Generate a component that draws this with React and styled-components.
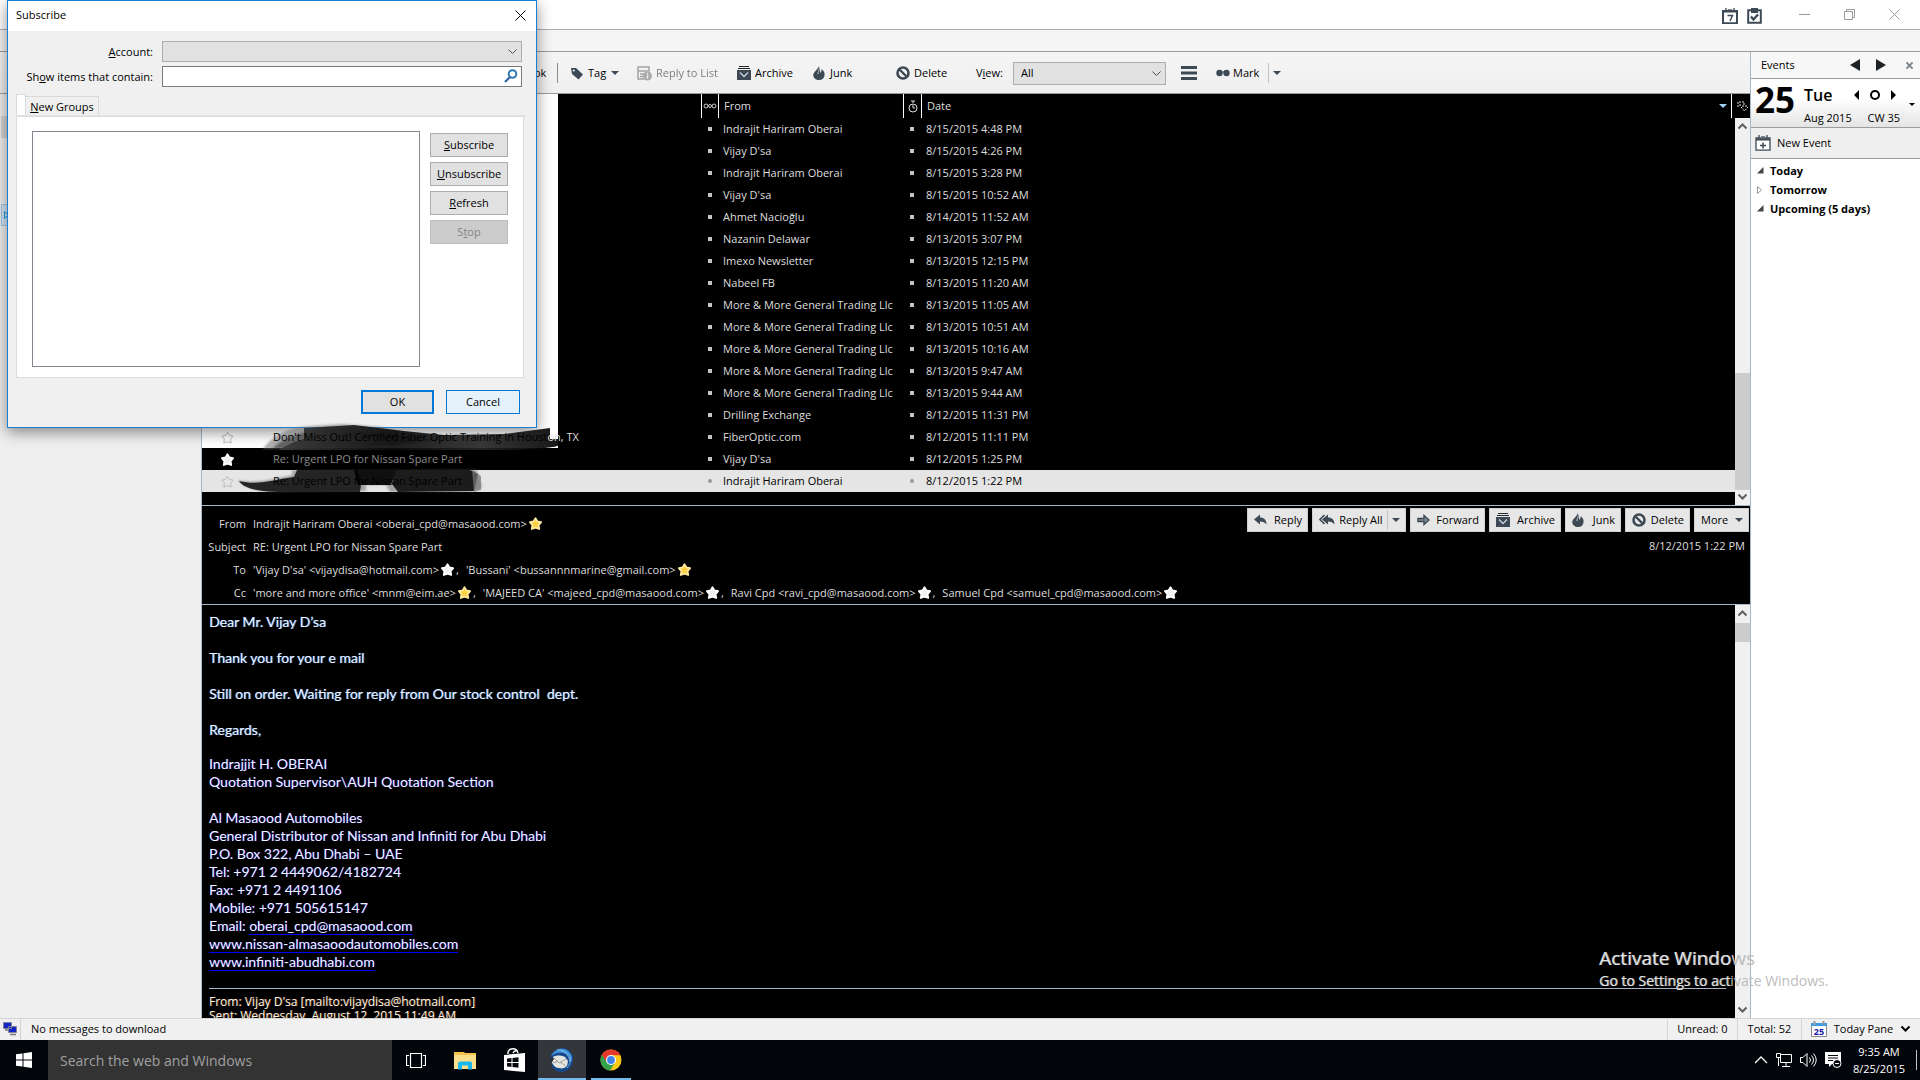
import React from 'react';
import styled, { createGlobalStyle } from 'styled-components';

const GlobalStyle = createGlobalStyle`
	* {
		box-sizing: border-box;
	}
	body {
		margin: 0;
		overflow: hidden;
		background: #000;
		color: #000;
		font-family: "Open Sans", "Noto Sans", sans-serif;
		font-size: 11px;
		line-height: 16px;
	}
	button, input, select {
		font: inherit;
		color: inherit;
		margin: 0;
		border-radius: 0;
	}
	svg {
		display: block;
		flex: none;
	}
`

const Desktop = styled.div`
	position: relative;
	display: flex;
	flex-direction: column;
	height: 100vh;
`

const TitleBar = styled.div`
	display: flex;
	justify-content: flex-end;
	align-items: center;
	height: 30px;
	padding-right: 20px;
	background: #fff;
	border-bottom: 1px solid #a5b0b9;
`

const TitleIcons = styled.div`
	display: flex;
	gap: 9px;
	margin-right: 37px;
	padding-top: 2px;
`

const WindowButtons = styled.div`
	display: flex;
	gap: 34px;
`

const PlainButton = styled.button`
	display: flex;
	align-items: center;
	gap: ${props => props.$gap || 4}px;
	padding: 0;
	border: 0;
	background: none;
	white-space: nowrap;
	opacity: ${props => props.disabled ? 0.5 : 1};
`

const MenuBar = styled.div`
	height: 22px;
	background: #f5f5f5;
	border-bottom: 1px solid #9c9c9c;
`

const Workspace = styled.div`
	display: flex;
	flex: 1;
	min-height: 0;
`

const MailArea = styled.div`
	display: flex;
	flex-direction: column;
	flex: 1;
	min-width: 0;
`

const Toolbar = styled.div`
	display: flex;
	align-items: center;
	height: 42px;
	padding: 1px 0 0 534px;
	background: linear-gradient(#f5f5f5, #efefef);
	border-bottom: 1px solid #9c9c9c;
`

const ToolGroup = styled.div`
	display: flex;
	align-items: center;
	gap: 5px;
	width: ${props => props.$width}px;
`

const Divider = styled.div`
	width: 1px;
	height: 20px;
	background: ${props => props.$light ? '#bfc4c8' : '#8a8a8a'};
	margin-right: ${props => props.$after || 0}px;
`

const SelectBox = styled.div`
	display: grid;
	width: ${props => props.$width};
	height: ${props => props.$height}px;
	align-items: center;
	> * {
		grid-area: 1 / 1;
	}
	svg {
		justify-self: end;
		margin-right: 5px;
		pointer-events: none;
	}
`

const Select = styled.select`
	appearance: none;
	width: 100%;
	height: 100%;
	padding: 0 7px;
	background: #e1e1e1;
	border: 1px solid #adadad;
`

const Panes = styled.div`
	display: flex;
	flex: 1;
	min-height: 0;
`

const FolderPane = styled.div`
	width: 202px;
	background: #efefef;
	border-right: 1px solid #a9b7c9;
`

const FolderMark = styled.div`
	display: flex;
	align-items: center;
	justify-content: center;
	width: 10px;
	height: 22px;
	margin: ${props => props.$top}px 0 0 1px;
	background: ${props => props.$color};
	border: 1px solid ${props => props.$line};
`

const MessageColumn = styled.div`
	display: flex;
	flex-direction: column;
	flex: 1;
	min-width: 0;
	background: #000;
`

const ThreadPane = styled.div`
	position: relative;
	padding-bottom: 13px;
	border-bottom: 1px solid #a9b7c9;
	background: linear-gradient(#fff, #fff) no-repeat 0 0 / 356px 356px, #000;
`

const ThreadTable = styled.table`
	width: 100%;
	table-layout: fixed;
	border-spacing: 0;
	color: #dedede;
	th, td {
		padding: 0;
		text-align: left;
		font-weight: 400;
		white-space: nowrap;
		overflow: hidden;
	}
	th {
		height: 24px;
	}
	td {
		height: 22px;
	}
`

const HeadCell = styled.th`
	border-left: ${props => props.$line ? '1px solid #fff' : '0'};
	&& {
		padding-left: ${props => props.$pad || 0}px;
	}
`

const HeadInner = styled.div`
	display: flex;
	align-items: center;
	justify-content: space-between;
	padding-right: 4px;
`

const MailRow = styled.tr`
	color: ${props => props.$selected ? '#000' : '#dedede'};
	td {
		background: ${props => props.$selected ? '#e5e5e5' : props.$dark ? '#000' : 'transparent'};
	}
`

const TextCell = styled.td`
	&& {
		padding-left: 5px;
	}
`

const Subject = styled.span`
	position: relative;
	z-index: 3;
	color: ${props => props.$color || '#000'};
`

const Dot = styled.div`
	width: 4px;
	height: 4px;
	margin: 0 auto;
	background: ${props => props.$selected ? '#9a9a9a' : '#c4c4c4'};
	border-radius: ${props => props.$selected ? 2 : 0}px;
`

const Smear = styled.svg`
	position: absolute;
	left: 36px;
	top: 328px;
	z-index: 2;
	pointer-events: none;
`

const ScrollTrack = styled.div`
	display: flex;
	flex-direction: column;
	align-items: center;
	justify-content: space-between;
	width: 15px;
	background: #f0f0f0;
	padding: 5px 0;
`

const ThreadScroll = styled(ScrollTrack)`
	position: absolute;
	top: 24px;
	right: 0;
	bottom: 0;
`

const Thumb = styled.div`
	width: 15px;
	height: ${props => props.$height}px;
	margin-top: ${props => props.$top}px;
	margin-bottom: auto;
	background: #cdcdcd;
`

const MessageHeader = styled.div`
	display: flex;
	justify-content: space-between;
	border-bottom: 1px solid #a9b7c9;
	color: #dedede;
`

const Fields = styled.dl`
	display: grid;
	grid-template-columns: 44px auto;
	column-gap: 7px;
	grid-auto-rows: 23px;
	align-items: center;
	margin: 6px 0 0;
	white-space: nowrap;
	dt {
		text-align: right;
	}
	dd {
		display: flex;
		align-items: center;
		margin: 0;
	}
`

const Address = styled.span`
	display: flex;
	align-items: center;
	gap: 2px;
	margin-right: 7px;
`

const HeaderSide = styled.div`
	display: flex;
	flex-direction: column;
	align-items: flex-end;
	gap: 6px;
	padding-top: 2px;
`

const ButtonRow = styled.div`
	display: flex;
	gap: 4px;
	padding-right: 1px;
`

const HeaderButton = styled.button`
	display: flex;
	align-items: center;
	justify-content: space-between;
	width: ${props => props.$width}px;
	height: 24px;
	padding: 0 5px 0 6px;
	border: 1px solid #d0d0d0;
	background: #e6e6e6;
	color: #000;
	white-space: nowrap;
`

const SentDate = styled.div`
	padding-right: 5px;
`

const MessageBody = styled.div`
	display: flex;
	flex: 1;
	min-height: 0;
	overflow: hidden;
`

const Letter = styled.div`
	flex: 1;
	min-width: 0;
	padding: 8px 9px 0 7px;
	overflow: hidden;
	color: #eef4ff;
	font-family: Lato, sans-serif;
	font-size: 14px;
	line-height: 18px;
	text-shadow: 1px 0 #2b6cb8;
	p {
		margin: 0 0 18px;
		white-space: pre-wrap;
	}
`

const Signature = styled.div`
	margin-top: -2px;
	color: #f4f4ff;
	text-shadow: 1px 0 #0a0aa0;
	a {
		color: inherit;
		text-decoration: none;
		border-bottom: 1px solid #00f;
	}
`

const Quoted = styled.div`
	margin-top: 17px;
	padding-top: 6px;
	border-top: 1px solid #a9b7c9;
	color: #fff3e4;
	font-family: "Open Sans", sans-serif;
	font-size: 12px;
	line-height: 14px;
	text-shadow: 1px 0 #5a3410;
`

const TodayPane = styled.aside`
	width: 170px;
	background: #fff;
	border-left: 1px solid #a9b7c9;
`

const EventsBar = styled.div`
	display: flex;
	align-items: center;
	height: 27px;
	padding: 0 7px 0 10px;
	background: #f7f7f7;
	border-bottom: 1px solid #9c9c9c;
`

const EventsArrows = styled.div`
	display: flex;
	gap: 16px;
	margin: 0 20px 0 auto;
`

const DayBox = styled.div`
	display: flex;
	height: 49px;
	padding: 0 4px 0 4px;
	background: linear-gradient(#fff 40%, #e4e4e4);
	border-bottom: 1px solid #9c9c9c;
`

const DayNumber = styled.div`
	width: 49px;
	font-size: 35px;
	line-height: 42px;
	font-weight: 700;
`

const DayInfo = styled.div`
	display: flex;
	flex-direction: column;
	width: 96px;
	padding-top: 7px;
	gap: 5px;
`

const DayLine = styled.div`
	display: flex;
	align-items: center;
	justify-content: space-between;
	line-height: 18px;
	padding-right: ${props => props.$big ? 3 : 0}px;
	font-size: ${props => props.$big ? 16 : 11}px;
	font-weight: ${props => props.$big ? 600 : 400};
`

const NewEventBar = styled.div`
	display: flex;
	align-items: center;
	height: 31px;
	padding-left: 4px;
	background: #efefef;
	border-bottom: 1px solid #9c9c9c;
`

const EventTree = styled.ul`
	margin: 0;
	padding: 2px 0 0 6px;
	list-style: none;
	font-weight: 700;
	li {
		display: flex;
		align-items: center;
		gap: 6px;
		height: 19px;
	}
`

const StatusBar = styled.div`
	display: flex;
	height: 22px;
	background: #f0f0f0;
	border-top: 1px solid #d5d5d5;
`

const StatusCell = styled.div`
	display: flex;
	align-items: center;
	justify-content: ${props => props.$grow ? 'flex-start' : 'center'};
	flex: ${props => props.$grow ? 1 : 'none'};
	width: ${props => props.$width}px;
	padding: 0 0 2px ${props => props.$grow ? 10 : 0}px;
	border-left: ${props => props.$first ? 0 : 1}px solid #d5d5d5;
`

const Taskbar = styled.div`
	display: flex;
	height: 40px;
	background: #02050a;
	color: #fff;
`

const TaskItem = styled.button`
	display: flex;
	align-items: center;
	justify-content: center;
	width: ${props => props.$width}px;
	padding: 0;
	border: 0;
	border-bottom: 2px solid ${props => props.$open ? '#76b9ed' : 'transparent'};
	border-top: 2px solid transparent;
	margin-right: ${props => props.$after || 0}px;
	background: ${props => props.$active ? '#33373c' : 'transparent'} border-box;
`

const SearchInput = styled.input`
	width: 344px;
	padding: 2px 12px 0;
	border: 0;
	background: #333;
	&& {
		font-size: 14px;
	}
	&::placeholder {
		color: #a0a0a0;
		opacity: 1;
	}
`

const Tray = styled.div`
	display: flex;
	align-items: center;
	gap: 8px;
	margin-left: auto;
	padding-right: 3px;
`

const Clock = styled.div`
	width: 58px;
	text-align: center;
	line-height: 17px;
`

const Watermark = styled.div`
	position: absolute;
	left: calc(100% - 321px);
	bottom: 88px;
	z-index: 4;
	color: #bcbcbc;
	font-size: 14px;
	line-height: 22px;
	white-space: nowrap;
	pointer-events: none;
	span {
		color: #e2e2e2;
		text-shadow: 1px 0 #8a8a8a;
	}
`

const WatermarkTitle = styled.div`
	font-size: 19px;
	line-height: 24px;
`

const Dialog = styled.div`
	position: absolute;
	left: 7px;
	top: 0;
	z-index: 1;
	width: 530px;
	background: #f0f0f0;
	border: 1px solid #1a7fd4;
	box-shadow: 0 4px 14px rgba(0, 0, 0, 0.45);
`

const DialogTitle = styled.div`
	display: flex;
	align-items: center;
	justify-content: space-between;
	height: 30px;
	padding: 0 10px 2px 8px;
	background: #fff;
`

const DialogForm = styled.div`
	display: grid;
	grid-template-columns: 137px 360px;
	grid-auto-rows: 21px;
	gap: 4px 9px;
	align-items: center;
	margin: 10px 0 0 8px;
	label {
		text-align: right;
	}
`

const FilterBox = styled.div`
	display: flex;
	align-items: center;
	height: 21px;
	padding: 0 3px 2px 0;
	background: #fff;
	border: 1px solid #7a7a7a;
	input {
		flex: 1;
		min-width: 0;
		height: 17px;
		border: 0;
		outline: 0;
		background: none;
	}
`

const TabStrip = styled.div`
	display: flex;
	align-items: flex-end;
	height: 21px;
	margin: 8px 10px 0 8px;
	border-bottom: 1px solid #e3e3e3;
`

const EmptyTab = styled.div`
	width: 10px;
	height: 21px;
	background: #fff;
	border: 1px solid #d9d9d9;
	border-bottom: 0;
`

const Tab = styled.button`
	height: 19px;
	width: 73px;
	padding: 2px 0 0;
	background: #f0f0f0;
	border: 1px solid #d9d9d9;
	border-left: 0;
	border-bottom: 0;
`

const TabPanel = styled.div`
	display: flex;
	align-items: flex-start;
	gap: 10px;
	margin: 0 12px 0 8px;
	height: 262px;
	padding: 14px 15px;
	background: #fff;
	border: 1px solid #dcdcdc;
`

const GroupList = styled.div`
	flex: 1;
	height: 236px;
	border: 1px solid #828790;
`

const SideButtons = styled.div`
	display: flex;
	flex-direction: column;
	gap: 5px;
	padding-top: 2px;
`

const DialogButton = styled.button`
	width: ${props => props.$width || 78}px;
	height: 24px;
	padding: 0;
	background: ${props => props.disabled ? '#ccc' : props.$hover ? '#e5f1fb' : '#e1e1e1'};
	border: ${props => props.$primary ? 2 : 1}px solid ${props => props.$primary || props.$hover ? '#0078d7' : props.disabled ? '#bfbfbf' : '#adadad'};
	color: ${props => props.disabled ? '#838383' : '#000'};
`

const DialogFooter = styled.div`
	display: flex;
	justify-content: flex-end;
	gap: 12px;
	padding: 12px 16px 13px;
`

const INK = '#3d4a55';

const senders = [
	['Indrajit Hariram Oberai', '8/15/2015 4:48 PM'],
	["Vijay D'sa", '8/15/2015 4:26 PM'],
	['Indrajit Hariram Oberai', '8/15/2015 3:28 PM'],
	["Vijay D'sa", '8/15/2015 10:52 AM'],
	['Ahmet Nacioğlu', '8/14/2015 11:52 AM'],
	['Nazanin Delawar', '8/13/2015 3:07 PM'],
	['Imexo Newsletter', '8/13/2015 12:15 PM'],
	['Nabeel FB', '8/13/2015 11:20 AM'],
	['More & More General Trading Llc', '8/13/2015 11:05 AM'],
	['More & More General Trading Llc', '8/13/2015 10:51 AM'],
	['More & More General Trading Llc', '8/13/2015 10:16 AM'],
	['More & More General Trading Llc', '8/13/2015 9:47 AM'],
	['More & More General Trading Llc', '8/13/2015 9:44 AM'],
	['Drilling Exchange', '8/12/2015 11:31 PM'],
	['FiberOptic.com', '8/12/2015 11:11 PM', 'houston'],
	["Vijay D'sa", '8/12/2015 1:25 PM', 'urgent'],
	['Indrajit Hariram Oberai', '8/12/2015 1:22 PM', 'selected'],
];

const Caret = ({ color = INK, size = 8 }) => (
	<svg width={size} height={size / 2} viewBox="0 0 8 4"><path d="M0 0h8L4 4z" fill={color} /></svg>
)

const Chevron = ({ up, color = '#505050', size = 9, weight = 1 }) => (
	<svg width={size} height="7" viewBox="0 0 9 7">
		<path d={up ? 'M.5 5.5l4-4 4 4' : 'M.5 1.5l4 4 4-4'} fill="none" stroke={color} strokeWidth={weight} />
	</svg>
)

const CloseX = ({ color, size = 11, weight = 1 }) => (
	<svg width={size} height={size} viewBox="0 0 11 11">
		<path d="M.5.5l10 10M10.5.5l-10 10" stroke={color} strokeWidth={weight} />
	</svg>
)

const Side = ({ left, height = 12, width = 10 }) => (
	<svg width={width} height={height} viewBox="0 0 10 12">
		<path d={left ? 'M10 0v12L0 6z' : 'M0 0v12l10-6z'} fill="#1c2226" />
	</svg>
)

const TagIcon = () => (
	<svg width="13" height="13" viewBox="0 0 13 13">
		<path d="M0 1h5l7 6.500L7.500 12.500 1 7z" fill={INK} />
		<circle cx="2.800" cy="3.500" r="1.100" fill="#f2f2f2" />
	</svg>
)

const ListReplyIcon = () => (
	<svg width="15" height="15" viewBox="0 0 15 15">
		<path d="M1 1h11v4H1zM1 5v8h6M3 8h4M3 10.500h3" fill="none" stroke="#555" strokeWidth="1.500" />
		<circle cx="10.500" cy="10" r="4.500" fill="#666" />
		<path d="M10.500 9.500v3M10.500 7v1.400" stroke="#fff" strokeWidth="1.400" />
	</svg>
)

const ArchiveIcon = () => (
	<svg width="14" height="14" viewBox="0 0 14 14">
		<path d="M2 .5h10M1 2.500h12" stroke="#222a30" />
		<path d="M0 4h14v10H0z" fill={INK} />
		<path d="M3 6.500l4 4 4-4" fill="none" stroke="#c9d3da" strokeWidth="1.300" />
	</svg>
)

const JunkIcon = () => (
	<svg width="12" height="14" viewBox="0 0 12 14">
		<path d="M6 0C6 3 8 4 7 7c2-1 1.500-3 1.500-4C11 5 12 7 11.500 9.500 11 12.500 9 14 6 14S.5 12 .3 9.500C0 6 4 5 6 0z" fill={INK} />
		<path d="M6 3c.6 2-1.500 3-1 5" fill="none" stroke="#c3cbd1" />
	</svg>
)

const DeleteIcon = () => (
	<svg width="14" height="14" viewBox="0 0 14 14">
		<circle cx="7" cy="7" r="5.500" fill="none" stroke={INK} strokeWidth="2.600" />
		<path d="M3.500 3.500l7 7" stroke={INK} strokeWidth="2.400" />
	</svg>
)

const ReplyIcon = ({ all }) => (
	<svg width={all ? 16 : 13} height="12" viewBox={all ? '-3 0 16 12' : '0 0 13 12'}>
		<path d="M0 5.500L6 .5v3c4 0 6.500 2.500 6.500 7C11 8.500 9 7.500 6 7.500v3z" fill={INK} />
		{all && <path d="M2.500 1L-2 5.500l4.500 4.500" fill="none" stroke={INK} strokeWidth="1.600" />}
	</svg>
)

const ForwardIcon = () => (
	<svg width="13" height="12" viewBox="0 0 13 12">
		<path d="M1 4.500h6v-3L12 6l-5 4.500v-3H1z" fill="#7c8994" stroke={INK} strokeWidth="1.400" />
	</svg>
)

const CalendarIcon = ({ children, bold }) => (
	<svg width="16" height="16" viewBox="0 0 16 16">
		<path d="M1 3h14v12.200H1z" fill="#fff" stroke={INK} strokeWidth={bold ? 2 : 1.300} />
		<path d={bold ? 'M1 3h14v1.500H1z' : 'M1 3.500h14v2H1z'} fill={INK} />
		<path d="M4 0v3M12 0v3M7 1v1M9 1v1" stroke={INK} strokeWidth="1.300" />
		{children}
	</svg>
)

const StarIcon = ({ kind }) => (
	<svg width="13" height="13" viewBox="0 0 13 13">
		<path
			d="M6.500 1.200l1.900 3.200 3.700.8-2.500 2.900.6 3.900-3.700-1.300-3.700 1.300.6-3.900L.9 5.200l3.700-.8z"
			fill={kind === 'gold' ? '#fcd040' : kind === 'outline' ? 'none' : '#f0f0f0'}
			stroke={kind === 'gold' ? '#ffe9a0' : kind === 'outline' ? '#bdbdbd' : '#fff'}
			strokeWidth={kind === 'outline' ? 1 : 1.800}
			strokeLinejoin="round"
		/>
	</svg>
)

const ThreadStar = ({ kind }) => {
	if(!kind){
		return null;
	}
	return <StarIcon kind={kind === 'urgent' ? 'white' : 'outline'} />
}

const renderSubject = (kind) => {
	if(kind === 'houston'){
		return <Subject>Don't Miss Out! Certified Fiber Optic Training in Houst<Subject $color="#dedede">on, TX</Subject></Subject>
	}
	if(kind === 'urgent'){
		return <Subject $color="#8c8c8c">Re: Urgent LPO for Nissan Spare Part</Subject>
	}
	if(kind === 'selected'){
		return <Subject>Re: Urgent LPO for Nissan Spare Part</Subject>
	}
	return null;
}

function ThreadList () {
	return (
		<ThreadPane>
			<ThreadTable>
				<colgroup>
					<col style={{width: 66}} />
					<col style={{width: 433}} />
					<col style={{width: 17}} />
					<col style={{width: 185}} />
					<col style={{width: 18}} />
					<col />
					<col style={{width: 19}} />
				</colgroup>
				<thead>
					<tr>
						<HeadCell />
						<HeadCell />
						<HeadCell $line $pad={1}>
							<svg width="14" height="6" viewBox="0 0 14 6">
								<g fill="none" stroke="#ccc"><circle cx="3" cy="3" r="2" /><circle cx="7" cy="3" r="1.500" /><circle cx="11" cy="3" r="2" /></g>
							</svg>
						</HeadCell>
						<HeadCell $line $pad={5}>From</HeadCell>
						<HeadCell $line $pad={4}>
							<svg width="10" height="13" viewBox="0 0 10 13">
								<path d="M3 1h4M5 1v2M5 5v3h2" stroke="#ddd" fill="none" />
								<circle cx="5" cy="8" r="4" fill="none" stroke="#ddd" />
							</svg>
						</HeadCell>
						<HeadCell $line $pad={5}>
							<HeadInner>Date<Caret color="#9fd0f5" /></HeadInner>
						</HeadCell>
						<HeadCell $line $pad={5}>
							<svg width="11" height="11" viewBox="0 0 11 11">
								<path d="M1 6V1h6v3M3 3v3M4 6l3.500 4L11 6M6 4v2M9 4v2" fill="none" stroke="#ddd" strokeDasharray="2 1" />
							</svg>
						</HeadCell>
					</tr>
				</thead>
				<tbody>
					{senders.map(([from, date, kind], index) => {
						const selected = kind === 'selected';
						return (
							<MailRow key={index} $selected={selected} $dark={kind === 'urgent'}>
								<HeadCell as="td" $pad={19}><ThreadStar kind={kind} /></HeadCell>
								<TextCell>{renderSubject(kind)}</TextCell>
								<td><Dot $selected={selected} /></td>
								<TextCell>{from}</TextCell>
								<td><Dot $selected={selected} /></td>
								<TextCell>{date}</TextCell>
								<td />
							</MailRow>
						)
					})}
				</tbody>
			</ThreadTable>
			<Smear width="330" height="72" viewBox="0 0 330 72">
				<defs>
					<filter id="soft"><feGaussianBlur stdDeviation="1" /></filter>
					<linearGradient id="ink" x1="0" x2="1">
						<stop offset="0" stopColor="#3a3a3a" />
						<stop offset="0.4" stopColor="#0c0c0c" />
						<stop offset="0.7" stopColor="#262626" />
						<stop offset="1" stopColor="#000" />
					</linearGradient>
				</defs>
				<g filter="url(#soft)">
					<path d="M25 27C34 14 50 5 74 4l30-2 40 3 20 6-90 16z" fill="#777" opacity="0.6" />
					<path d="M34 27C44 16 62 10 90 6l50 4 60 8-80 9z" fill="#333" opacity="0.6" />
				</g>
				<path d="M40 28l16-8 10-3V6l50-3 50 6 40 4 60-1 46-6v11h17c0 6-12 8-22 9l-27 2z" fill="url(#ink)" opacity="0.92" />
				<path d="M0 58c18 4 36-1 54-5v-5h94l90-1 6 18-6 3-6 2h-80l-4-7h-20v6l-72 1C30 71 8 69 0 58z" fill="#444" opacity="0.4" filter="url(#soft)" />
				<path d="M1 59c20 5 36-2 55-4l3-7h60l4 15-1 7H56C34 70 8 70 1 59z" fill="#161616" opacity="0.9" />
				<path d="M116 48h44l-8 15h-32z" fill="#000" opacity="0.9" />
				<path d="M156 48h76l8 4-4 17-76 1-6-8z" fill="#151515" opacity="0.95" />
				<path d="M234 48l9 6v14l-7 2z" fill="#777" opacity="0.7" />
			</Smear>
			<ThreadScroll>
				<Chevron up weight={2} color="#606060" />
				<Thumb $top={243} $height={117} />
				<Chevron weight={2} color="#606060" />
			</ThreadScroll>
		</ThreadPane>
	)
}

const MessageHead = () => (
	<MessageHeader>
		<Fields>
			<dt>From</dt>
			<dd><Address>Indrajit Hariram Oberai &lt;oberai_cpd@masaood.com&gt;<StarIcon kind="gold" /></Address></dd>
			<dt>Subject</dt>
			<dd>RE: Urgent LPO for Nissan Spare Part</dd>
			<dt>To</dt>
			<dd>
				<Address>'Vijay D'sa' &lt;vijaydisa@hotmail.com&gt;<StarIcon />,</Address>
				<Address>'Bussani' &lt;bussannnmarine@gmail.com&gt;<StarIcon kind="gold" /></Address>
			</dd>
			<dt>Cc</dt>
			<dd>
				<Address>'more and more office' &lt;mnm@eim.ae&gt;<StarIcon kind="gold" />,</Address>
				<Address>'MAJEED CA' &lt;majeed_cpd@masaood.com&gt;<StarIcon />,</Address>
				<Address>Ravi Cpd &lt;ravi_cpd@masaood.com&gt;<StarIcon />,</Address>
				<Address>Samuel Cpd &lt;samuel_cpd@masaood.com&gt;<StarIcon /></Address>
			</dd>
		</Fields>
		<HeaderSide>
			<ButtonRow>
				<HeaderButton $width={61}><ReplyIcon />Reply</HeaderButton>
				<HeaderButton $width={94}><ReplyIcon all />Reply All<Divider $light /><Caret /></HeaderButton>
				<HeaderButton $width={75}><ForwardIcon />Forward</HeaderButton>
				<HeaderButton $width={72}><ArchiveIcon />Archive</HeaderButton>
				<HeaderButton $width={56}><JunkIcon />Junk</HeaderButton>
				<HeaderButton $width={65}><DeleteIcon />Delete</HeaderButton>
				<HeaderButton $width={55}>More<Caret /></HeaderButton>
			</ButtonRow>
			<SentDate>8/12/2015 1:22 PM</SentDate>
		</HeaderSide>
	</MessageHeader>
)

const MessageText = () => (
	<MessageBody>
		<Letter>
			<p>Dear Mr. Vijay D’sa</p>
			<p>Thank you for your e mail</p>
			<p>{'Still on order. Waiting for reply from Our stock control  dept.'}</p>
			<p>Regards,</p>
			<Signature>
				<div>Indrajjit H. OBERAI</div>
				<p>Quotation Supervisor\AUH Quotation Section</p>
				<div>Al Masaood Automobiles</div>
				<div>General Distributor of Nissan and Infiniti for Abu Dhabi</div>
				<div>P.O. Box 322, Abu Dhabi – UAE</div>
				<div>Tel: +971 2 4449062/4182724</div>
				<div>Fax: +971 2 4491106</div>
				<div>Mobile: +971 505615147</div>
				<div>Email: <a href="#mail">oberai_cpd@masaood.com</a></div>
				<div><a href="#nissan">www.nissan-almasaoodautomobiles.com</a></div>
				<div><a href="#infiniti">www.infiniti-abudhabi.com</a></div>
			</Signature>
			<Quoted>
				<div>From: Vijay D'sa [mailto:vijaydisa@hotmail.com]</div>
				<div>Sent: Wednesday, August 12, 2015 11:49 AM</div>
			</Quoted>
		</Letter>
		<ScrollTrack>
			<Chevron up weight={2} color="#606060" />
			<Thumb $top={6} $height={19} />
			<Chevron weight={2} color="#606060" />
		</ScrollTrack>
	</MessageBody>
)

const MainToolbar = () => (
	<Toolbar>
		<ToolGroup $width={23}>ok</ToolGroup>
		<Divider $after={13} />
		<ToolGroup $width={66}>
			<PlainButton><TagIcon />Tag</PlainButton>
			<PlainButton aria-label="Tag menu"><Caret /></PlainButton>
		</ToolGroup>
		<ToolGroup $width={100}><PlainButton disabled><ListReplyIcon />Reply to List</PlainButton></ToolGroup>
		<ToolGroup $width={76}><PlainButton><ArchiveIcon />Archive</PlainButton></ToolGroup>
		<ToolGroup $width={83}><PlainButton $gap={5}><JunkIcon />Junk</PlainButton></ToolGroup>
		<ToolGroup $width={80}><PlainButton><DeleteIcon />Delete</PlainButton></ToolGroup>
		<ToolGroup $width={37}><label htmlFor="view">V<u>i</u>ew:</label></ToolGroup>
		<ToolGroup $width={168}>
			<SelectBox $width="153px" $height={23}>
				<Select id="view"><option>All</option></Select>
				<Chevron />
			</SelectBox>
		</ToolGroup>
		<ToolGroup $width={35}>
			<PlainButton aria-label="Menu">
				<svg width="16" height="14" viewBox="0 0 16 14"><path d="M0 1.500h16M0 7h16M0 12.500h16" stroke={INK} strokeWidth="3" /></svg>
			</PlainButton>
		</ToolGroup>
		<ToolGroup $width={52}>
			<PlainButton $gap={3}>
				<svg width="14" height="8" viewBox="0 0 14 8"><circle cx="3.500" cy="4" r="3.200" fill={INK} /><circle cx="10.500" cy="4" r="3.200" fill={INK} /><path d="M5 3h4" stroke={INK} /></svg>
				Mark
			</PlainButton>
		</ToolGroup>
		<Divider $light $after={4} />
		<PlainButton aria-label="Mark menu"><Caret /></PlainButton>
	</Toolbar>
)

const Events = () => (
	<TodayPane>
		<EventsBar>
			Events
			<EventsArrows><Side left /><Side /></EventsArrows>
			<CloseX color="#7d858c" size={7} weight={3} />
		</EventsBar>
		<DayBox>
			<DayNumber>25</DayNumber>
			<DayInfo>
				<DayLine $big>
					Tue
					<svg width="44" height="12" viewBox="0 0 44 12">
						<path d="M6 1v10L1 6zM38 1v10l5-5z" />
						<circle cx="22" cy="6" r="4" fill="none" stroke="#000" strokeWidth="2" />
					</svg>
				</DayLine>
				<DayLine>Aug 2015<span>CW 35</span></DayLine>
			</DayInfo>
			<svg width="15" height="28" viewBox="0 0 15 28"><path d="M9 24h6l-3 3z" /></svg>
		</DayBox>
		<NewEventBar>
			<PlainButton $gap={6}>
				<CalendarIcon><path d="M8 7.500v6M5 10.500h6" stroke={INK} strokeWidth="1.500" /></CalendarIcon>
				New Event
			</PlainButton>
		</NewEventBar>
		<EventTree>
			<li><svg width="7" height="7" viewBox="0 0 7 7"><path d="M6.500 0v6.500H0z" fill="#444" /></svg>Today</li>
			<li><svg width="7" height="8" viewBox="0 0 7 8"><path d="M.5.5v7l4-3.500z" fill="none" stroke="#999" /></svg>Tomorrow</li>
			<li><svg width="7" height="7" viewBox="0 0 7 7"><path d="M6.500 0v6.500H0z" fill="#444" /></svg>Upcoming (5 days)</li>
		</EventTree>
	</TodayPane>
)

const SubscribeDialog = () => (
	<Dialog role="dialog" aria-label="Subscribe">
		<DialogTitle>
			Subscribe
			<PlainButton aria-label="Close"><CloseX color="#000" /></PlainButton>
		</DialogTitle>
		<DialogForm>
			<label htmlFor="account"><u>A</u>ccount:</label>
			<SelectBox $width="100%" $height={21}>
				<Select id="account" />
				<Chevron />
			</SelectBox>
			<label htmlFor="filter">Sh<u>o</u>w items that contain:</label>
			<FilterBox>
				<input id="filter" type="text" />
				<svg width="14" height="14" viewBox="0 0 14 14">
					<circle cx="8.500" cy="5" r="3.800" fill="#fff" stroke="#2f78b5" strokeWidth="2" />
					<path d="M6 8l-5 5" stroke="#2b64a0" strokeWidth="2.200" />
				</svg>
			</FilterBox>
		</DialogForm>
		<TabStrip>
			<EmptyTab />
			<Tab><u>N</u>ew Groups</Tab>
		</TabStrip>
		<TabPanel>
			<GroupList />
			<SideButtons>
				<DialogButton><u>S</u>ubscribe</DialogButton>
				<DialogButton><u>U</u>nsubscribe</DialogButton>
				<DialogButton><u>R</u>efresh</DialogButton>
				<DialogButton disabled>S<u>t</u>op</DialogButton>
			</SideButtons>
		</TabPanel>
		<DialogFooter>
			<DialogButton $width={73} $primary>OK</DialogButton>
			<DialogButton $width={74} $hover>Cancel</DialogButton>
		</DialogFooter>
	</Dialog>
)

const WindowsTaskbar = () => (
	<Taskbar>
		<TaskItem $width={48} aria-label="Start">
			<svg width="16" height="16" viewBox="0 0 16 16"><path d="M0 2.300L6.500 1.400v6.100H0zM7.500 1.200L16 0v7.500H7.500zM0 8.500h6.500v6.100L0 13.700zM7.500 8.500H16V16l-8.500-1.200z" fill="#fff" /></svg>
		</TaskItem>
		<SearchInput aria-label="Search" placeholder="Search the web and Windows" />
		<TaskItem $width={48} aria-label="Task view">
			<svg width="20" height="15" viewBox="0 0 20 15"><path d="M4.500.5h11v14h-11zM3 2.500H.5v10H3M17 2.500h2.500v10H17" fill="none" stroke="#fff" strokeWidth="1.200" /></svg>
		</TaskItem>
		<TaskItem $width={50} aria-label="File Explorer">
			<svg width="22" height="19" viewBox="0 0 22 19">
				<path d="M0 1h10l1 1h11v16H0z" fill="#f2c54a" />
				<path d="M0 4h22v14H0z" fill="#fbe08c" />
				<path d="M4 18.500v-6q0-2 2-2h10q2 0 2 2v6h-4v-4H8v4z" fill="#18b8ee" />
			</svg>
		</TaskItem>
		<TaskItem $width={48} aria-label="Store">
			<svg width="21" height="24" viewBox="0 0 21 24">
				<path d="M4 6V4q1-3.200 5-3.200T14 5M9 5q1-3 5-2" fill="none" stroke="#fff" strokeWidth="1.400" />
				<path d="M0 7l21-2v19L0 22z" fill="#fff" />
				<path d="M3 10.500l4.500-.5v4H3zM8.500 9.900l6-.7V14h-6zM3 15h4.500v4l-4.500-.500zM8.500 15h6v4.800l-6-.7z" fill="#05080c" />
			</svg>
		</TaskItem>
		<TaskItem $width={48} $active $open $after={5} aria-label="Thunderbird">
			<svg width="24" height="24" viewBox="0 0 24 24">
				<path d="M1 8C3 3 8 0 13 0c7 1 11 7 10 13-1 7-6 11-12 11-4 0-7-2-9-6z" fill="#16488c" />
				<path d="M1 8C4 2 9 0 14 1c5 1 9 6 8 12-1-4-4-7-8-8C9 4 5 5 1 8z" fill="#3f8fd6" />
				<path d="M7 2c7-1 13 4 14 11M11 3c5 1 8 5 9 11M17 20c3-3 4-7 3-11" fill="none" stroke="#7fc0ee" strokeWidth=".8" />
				<path d="M3 9c3-2 8-2 12 0l3 4-1 5c-2 2-5 3-8 2-3 0-5-2-7-5z" fill="#e6e4de" />
				<path d="M4 10l5 5 7-4M3 15l5-2M10 14l6 4" fill="none" stroke="#9a9a94" strokeWidth=".9" />
				<path d="M0 12l3-3 1 2-2 3z" fill="#2a2f36" />
			</svg>
		</TaskItem>
		<TaskItem $width={40} $open aria-label="Chrome">
			<svg width="22" height="22" viewBox="0 0 22 22">
				<circle cx="11" cy="11" r="10.500" fill="#fbc816" />
				<path d="M11 11L1.900 5.700A10.500 10.500 0 0 0 10 21.500l5-8z" fill="#34a24a" />
				<path d="M1.900 5.700A10.500 10.500 0 0 1 20.400 6.200H11L6.500 13z" fill="#e5392e" />
				<circle cx="11" cy="11" r="5" fill="#fff" />
				<circle cx="11" cy="11" r="3.900" fill="#4083ea" />
			</svg>
		</TaskItem>
		<Tray>
			<svg width="14" height="8" viewBox="0 0 14 8"><path d="M1 7l6-6 6 6" fill="none" stroke="#fff" strokeWidth="1.300" /></svg>
			<svg width="16" height="14" viewBox="0 0 16 14"><path d="M4.500 1.500h11v8h-11zM10 10v3M6 13.500h8M.5.5h4v4h-4zM2.500 5v8" fill="none" stroke="#fff" /></svg>
			<svg width="17" height="14" viewBox="0 0 17 14"><path d="M.5 4.500H3l4-4v13l-4-4H.5zM9.500 4.500q2 2.500 0 5M11.500 2.500q4 4.500 0 9M13.500.5q5.500 6.500 0 13" fill="none" stroke="#fff" /></svg>
			<svg width="17" height="16" viewBox="0 0 17 16">
				<path d="M0 0h16v12H7l-3 3v-3H0z" fill="#fff" />
				<path d="M3 3.500h10M3 6h10M3 8.500h5" stroke="#02050a" />
				<circle cx="12" cy="11.500" r="4" fill="#02050a" stroke="#fff" />
				<path d="M10 11.500h4" stroke="#fff" />
			</svg>
			<Clock>9:35 AM<br />8/25/2015</Clock>
			<Divider $light />
		</Tray>
	</Taskbar>
)

export default function App () {
	return (
		<Desktop>
			<GlobalStyle />
			<TitleBar>
				<TitleIcons>
					<CalendarIcon bold><path d="M5.500 7.500h5L8 13" fill="none" stroke={INK} strokeWidth="1.500" /></CalendarIcon>
					<svg width="15" height="16" viewBox="0 0 15 16">
						<path d="M1.200 2.200h12.600v12.600H1.200z" fill="none" stroke={INK} strokeWidth="2" />
						<path d="M4 0h7v5H4z" fill={INK} />
						<path d="M4 8.500l2.500 3 4.500-5" fill="none" stroke={INK} strokeWidth="2.400" />
					</svg>
				</TitleIcons>
				<WindowButtons>
					<PlainButton aria-label="Minimize"><svg width="11" height="11" viewBox="0 0 11 11"><path d="M0 5.500h11" stroke="#999" /></svg></PlainButton>
					<PlainButton aria-label="Restore"><svg width="11" height="11" viewBox="0 0 11 11"><path d="M.5 2.500h8v8h-8zM2.500 2V.5h8v8H9" fill="none" stroke="#999" /></svg></PlainButton>
					<PlainButton aria-label="Close window"><CloseX color="#999" /></PlainButton>
				</WindowButtons>
			</TitleBar>
			<MenuBar />
			<Workspace>
				<MailArea>
					<MainToolbar />
					<Panes>
						<FolderPane>
							<FolderMark $top={22} $color="#d6d6d6" $line="#d6d6d6" />
							<FolderMark $top={66} $color="#d5e6f5" $line="#9fc5e8">
								<svg width="5" height="8" viewBox="0 0 5 8"><path d="M.5.5v7L4 4z" fill="none" stroke="#1ba1e2" /></svg>
							</FolderMark>
						</FolderPane>
						<MessageColumn>
							<ThreadList />
							<MessageHead />
							<MessageText />
						</MessageColumn>
					</Panes>
				</MailArea>
				<Events />
			</Workspace>
			<StatusBar>
				<StatusCell $first $width={20}>
					<svg width="15" height="14" viewBox="0 0 15 14">
						<path d="M.5.5h8v6h-8zM5.500 4.500h8v6h-8z" fill="#1424c8" stroke="#7d8596" />
						<path d="M2 8h3M7 12.500h6" stroke="#777" strokeWidth="1.500" />
					</svg>
				</StatusCell>
				<StatusCell $grow>No messages to download</StatusCell>
				<StatusCell $width={70}>Unread: 0</StatusCell>
				<StatusCell $width={64}>Total: 52</StatusCell>
				<StatusCell $width={119}>
					<PlainButton $gap={7}>
						<svg width="16" height="16" viewBox="0 0 16 16">
							<path d="M.5 2.500h15v13H.5z" fill="#fff" stroke="#888" />
							<path d="M0 2h16v3H0z" fill="#3a9be8" />
							<path d="M3.500 0v4M12.500 0v4" stroke="#999" strokeWidth="2" />
							<text x="8" y="13.500" textAnchor="middle" fontSize="9" fontWeight="700" fill="#1414a8">25</text>
						</svg>
						Today Pane
						<Chevron color="#000" size={11} weight={2} />
					</PlainButton>
				</StatusCell>
			</StatusBar>
			<WindowsTaskbar />
			<SubscribeDialog />
			<Watermark>
				<WatermarkTitle><span>Activate Windo</span>ws</WatermarkTitle>
				<span>Go to Settings to act</span>ivate Windows.
			</Watermark>
		</Desktop>
	)
}
